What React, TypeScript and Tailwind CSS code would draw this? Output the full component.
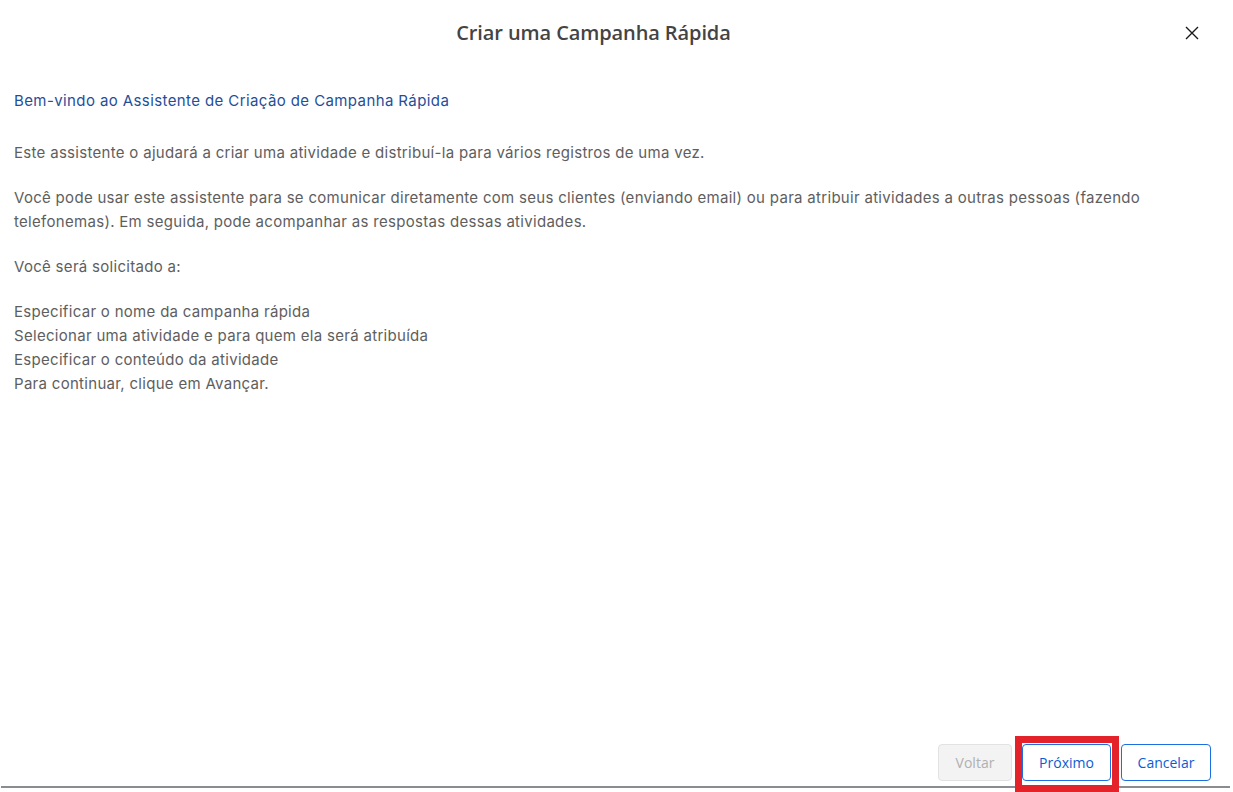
import React from "react";

export default function App() {
  const body = { fontFamily: "Inter, 'Noto Sans', sans-serif" };
  const ui = { fontFamily: "'Open Sans', 'Noto Sans', sans-serif" };
  return (
    <div className="w-[1233px] h-[792px] bg-white flex flex-col overflow-hidden relative">
      <header className="h-[66px] flex items-center justify-center relative shrink-0 pr-[46px]">
        <h1 style={ui} className="text-[20px] font-semibold text-[#444444] tracking-[-0.1px]">
          Criar uma Campanha Rápida
        </h1>
        <button className="absolute right-[33px] top-[25px] w-[16px] h-[16px] flex items-center justify-center">
          <svg width="14" height="14" viewBox="0 0 14 14" fill="none">
            <path d="M1 1L13 13M13 1L1 13" stroke="#1a1a1a" strokeWidth="1.4" />
          </svg>
        </button>
      </header>
      <main style={body} className="flex-1 pl-[14px] pr-[60px] text-[15px] leading-[24px] tracking-[0.3px] text-[#5e5e5e]">
        <p className="text-[#1f4f99] mt-[23px] tracking-[0.4px]">Bem-vindo ao Assistente de Criação de Campanha Rápida</p>
        <p className="mt-[28px]">
          Este assistente o ajudará a criar uma atividade e distribuí-la para vários registros de uma vez.
        </p>
        <p className="mt-[21px]">
          Você pode usar este assistente para se comunicar diretamente com seus clientes (enviando email) ou para atribuir atividades a outras pessoas (fazendo telefonemas). Em seguida, pode acompanhar as respostas dessas atividades.
        </p>
        <p className="mt-[21px]">Você será solicitado a:</p>
        <div className="mt-[21px]">
          <p>Especificar o nome da campanha rápida</p>
          <p>Selecionar uma atividade e para quem ela será atribuída</p>
          <p>Especificar o conteúdo da atividade</p>
          <p>Para continuar, clique em Avançar.</p>
        </div>
      </main>
      <footer style={ui} className="h-[54px] shrink-0 flex items-start justify-end gap-[10px] pr-[19px] pt-[10px] border-b-[2px] border-[#8a8c94] mb-[4px] ml-[1px] mr-[3px]">
        <button disabled className="w-[74px] h-[37px] rounded-[4px] border border-[#e2e2e2] bg-[#f3f3f3] text-[14px] text-[#b0b0b0]">
          Voltar
        </button>
        <button className="w-[89px] h-[37px] rounded-[4px] border border-[#1b6fe0] bg-white text-[14px] text-[#0b5cd5]">
          Próximo
        </button>
        <button className="w-[90px] h-[37px] rounded-[4px] border border-[#1b6fe0] bg-white text-[14px] text-[#0b5cd5]">
          Cancelar
        </button>
      </footer>
      <div className="absolute left-[1015px] top-[736px] w-[104px] h-[56px] border-[7px] border-[#e3222a] pointer-events-none" />
    </div>
  );
}
